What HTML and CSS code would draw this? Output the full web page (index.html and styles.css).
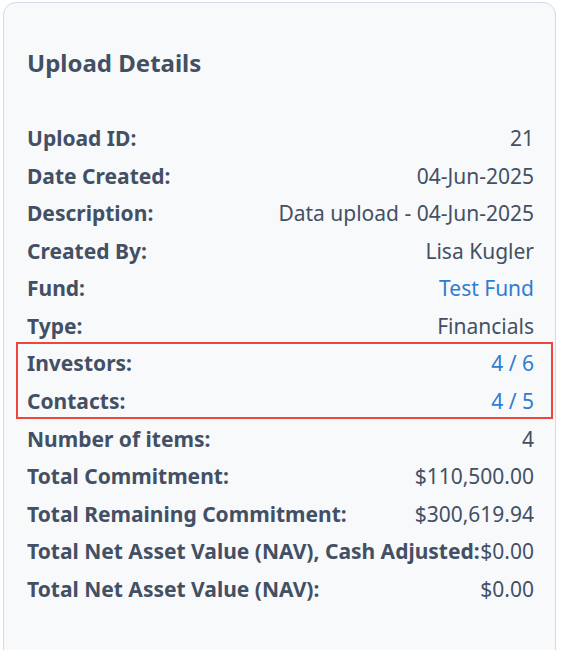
FILE: index.html
```html
<!DOCTYPE html>
<html>
<head>
<meta charset="utf-8">
<link rel="stylesheet" href="styles.css">
</head>
<body>
<div class="card">
  <h2 class="title">Upload Details</h2>
  <div class="rows">
    <div class="row"><span class="label">Upload ID:</span><span class="value">21</span></div>
    <div class="row"><span class="label">Date Created:</span><span class="value">04-Jun-2025</span></div>
    <div class="row"><span class="label">Description:</span><span class="value">Data upload - 04-Jun-2025</span></div>
    <div class="row"><span class="label">Created By:</span><span class="value">Lisa Kugler</span></div>
    <div class="row"><span class="label">Fund:</span><a class="value link">Test Fund</a></div>
    <div class="row"><span class="label">Type:</span><span class="value">Financials</span></div>
    <div class="group">
      <div class="row"><span class="label">Investors:</span><a class="value link">4 / 6</a></div>
      <div class="row"><span class="label">Contacts:</span><a class="value link">4 / 5</a></div>
    </div>
    <div class="row"><span class="label">Number of items:</span><span class="value">4</span></div>
    <div class="row"><span class="label">Total Commitment:</span><span class="value">$110,500.00</span></div>
    <div class="row"><span class="label">Total Remaining Commitment:</span><span class="value">$300,619.94</span></div>
    <div class="row"><span class="label">Total Net Asset Value (NAV), Cash Adjusted:</span><span class="value">$0.00</span></div>
    <div class="row"><span class="label">Total Net Asset Value (NAV):</span><span class="value">$0.00</span></div>
  </div>
</div>
</body>
</html>
```
FILE: styles.css
```css
html, body {
  margin: 0;
  padding: 0;
  background: #ffffff;
  overflow: hidden;
}
body {
  padding: 2px 6px 0 3px;
  font-family: "Noto Sans", "Open Sans", sans-serif;
  color: #435064;
}
.card {
  border: 1px solid #d3dbe6;
  border-radius: 13px;
  background: #f8f9fb;
  padding: 44px 21px 40px 23px;
  height: 680px;
  box-sizing: border-box;
}
.title {
  margin: 0 0 45px 0;
  font-size: 24px;
  line-height: 32px;
  font-weight: 700;
  color: #435064;
}
.rows {
  display: flex;
  flex-direction: column;
  gap: 9.58px;
}
.group {
  position: relative;
  display: flex;
  flex-direction: column;
  gap: 9.58px;
}
.group::after {
  content: "";
  position: absolute;
  top: -7px;
  bottom: -4px;
  left: -11px;
  right: -19px;
  border: 2px solid #f0443f;
}
.row {
  display: flex;
  justify-content: space-between;
  align-items: center;
  font-size: 21px;
  line-height: 28px;
  white-space: nowrap;
}
.label {
  font-weight: 700;
}
.value {
  font-weight: 400;
  text-align: right;
}
.link {
  color: #2f7dcf;
}
```
